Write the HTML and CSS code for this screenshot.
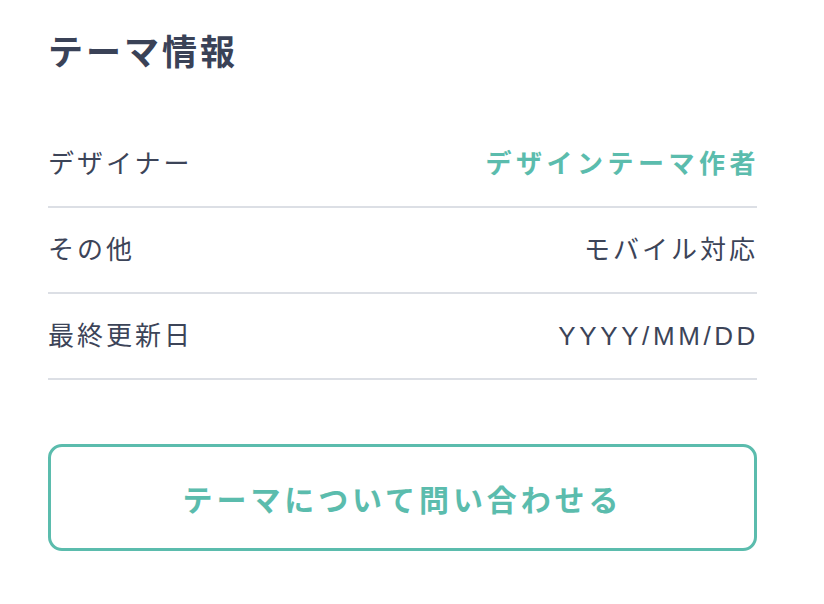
FILE: index.html
```html
<!DOCTYPE html>
<html lang="ja">
<head>
  <meta charset="UTF-8">
  <title>テーマ情報</title>
  <link rel="stylesheet" href="styles.css">
</head>
<body>
<section class="theme-info">
  <h2>テーマ情報</h2>
  <dl class="info-list">
    <div class="info-row">
      <dt>デザイナー</dt>
      <dd class="accent">デザインテーマ作者</dd>
    </div>
    <div class="info-row">
      <dt>その他</dt>
      <dd>モバイル対応</dd>
    </div>
    <div class="info-row">
      <dt>最終更新日</dt>
      <dd class="date">YYYY/MM/DD</dd>
    </div>
  </dl>
  <a class="contact-btn" href="#">テーマについて問い合わせる</a>
</section>
</body>
</html>
```

FILE: styles.css
```css
body { margin: 0; background: #fff; color: #3c4458;
  font-family: "Liberation Sans", "Noto Sans CJK JP", sans-serif; }
.theme-info { width: 709px; margin: 0 0 0 48px; padding-top: 27px; }
h2 { margin: 0 0 44px; font-size: 35px; line-height: 51px; font-weight: 700;
  letter-spacing: 3px; color: #3a4257; }
.info-list { margin: 0; }
.info-row { display: flex; justify-content: space-between; align-items: center;
  height: 84px; border-bottom: 2px solid #dcdfe5; }
.info-row dt, .info-row dd { margin: 0; font-size: 26px; letter-spacing: 3px;
  line-height: 1.4; }
.info-row dd { margin-right: -1px; }
.info-row dd.date { letter-spacing: 3.6px; margin-right: -2px; }
.info-row dd.accent { color: #5bbcad; font-weight: 700; letter-spacing: 4.5px; margin-right: -3px; }
.contact-btn { display: flex; align-items: center; justify-content: center;
  margin-top: 64px; height: 101px; border: 3px solid #5bbcad; border-radius: 14px;
  color: #5bbcad; font-size: 30px; font-weight: 700; letter-spacing: 3.9px;
  text-decoration: none; }
```
